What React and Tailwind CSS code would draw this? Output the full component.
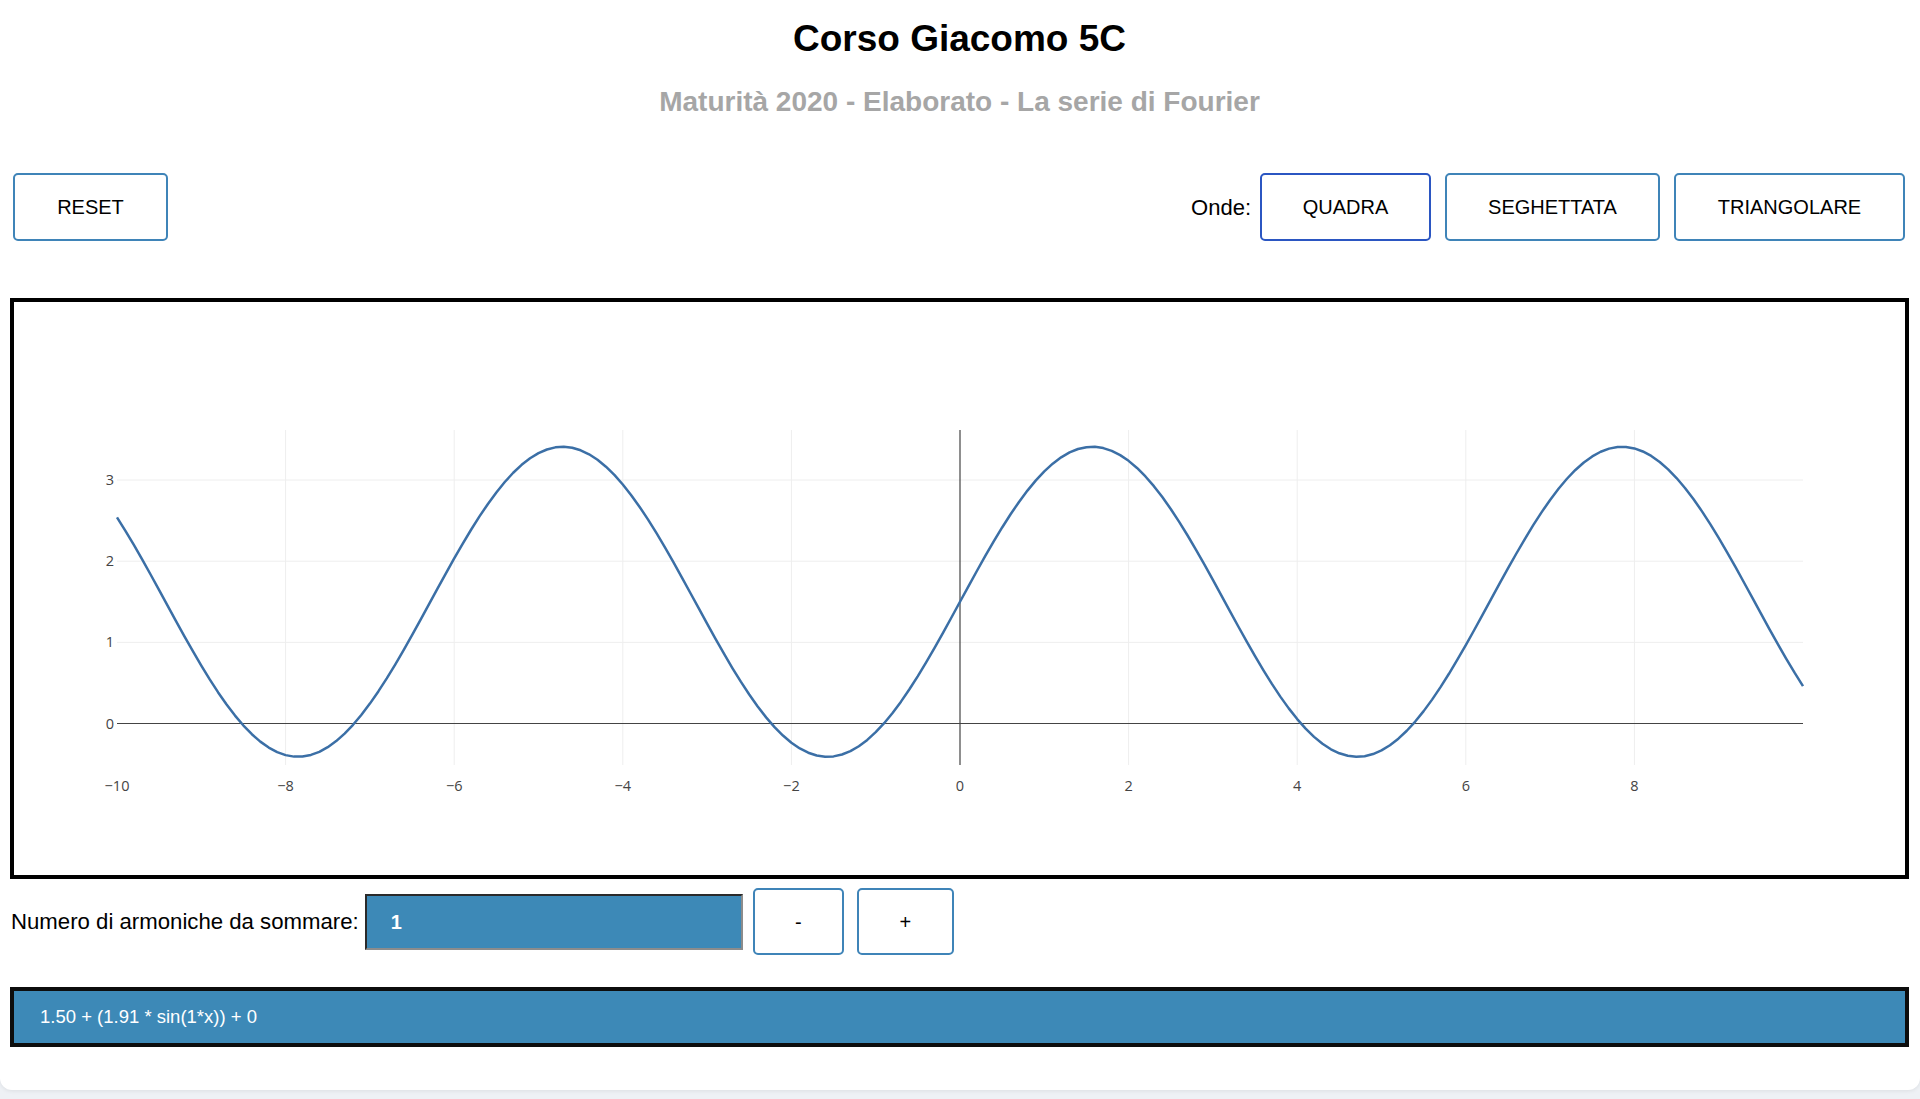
import React from 'react';

// plot geometry (svg units, same as pixels)
const X0 = 946;
const SX = 84.3;
const Y0 = 421.5;
const SY = 81.15;
const px = (x) => X0 + SX * x;
const py = (y) => Y0 - SY * y;
const PLOT_TOP = 128;
const PLOT_BOTTOM = 463;

function serie(x) {
  return 1.5 + 1.91 * Math.sin(1 * x);
}

function Grafico() {
  const punti = [];
  for (let i = 0; i <= 200; i++) {
    const x = -10 + i * 0.1;
    punti.push(`${px(x).toFixed(2)},${py(serie(x)).toFixed(2)}`);
  }
  const xTicks = [-10, -8, -6, -4, -2, 0, 2, 4, 6, 8];
  const yTicks = [0, 1, 2, 3];

  return (
    <svg viewBox="0 0 1891 573" className="block w-full h-[573px]">
      {/* griglia */}
      {[1, 2, 3].map((v) => (
        <line key={'h' + v} x1={px(-10)} x2={px(10)} y1={py(v)} y2={py(v)} stroke="#eeeeee" strokeWidth="1" />
      ))}
      {[-8, -6, -4, -2, 2, 4, 6, 8].map((v) => (
        <line key={'v' + v} x1={px(v)} x2={px(v)} y1={PLOT_TOP} y2={PLOT_BOTTOM} stroke="#eeeeee" strokeWidth="1" />
      ))}
      {/* assi */}
      <line x1={px(-10)} x2={px(10)} y1={py(0)} y2={py(0)} stroke="#444" strokeWidth="1.2" />
      <line x1={px(0)} x2={px(0)} y1={PLOT_TOP} y2={PLOT_BOTTOM} stroke="#444" strokeWidth="1.2" />

      <polyline points={punti.join(' ')} fill="none" stroke="#3b6fa6" strokeWidth="2.5" strokeLinejoin="round" />

      <g fontFamily="'Open Sans', Verdana, Arial, sans-serif" fontSize="14.5" fill="#444">
        {yTicks.map((v) => (
          <text key={'yt' + v} x={100} y={py(v) + 5} textAnchor="end">
            {v}
          </text>
        ))}
        {xTicks.map((v) => (
          <text key={'xt' + v} x={px(v)} y={489} textAnchor="middle">
            {v < 0 ? '\u2212' + Math.abs(v) : v}
          </text>
        ))}
      </g>
    </svg>
  );
}

export default function App() {
  const btn = 'h-[68px] rounded-[5px] border-2 bg-white text-[20px] text-black flex items-center justify-center';

  return (
    <div className="min-h-screen bg-[#eef1f5]" style={{ fontFamily: "'Liberation Sans', Arial, Helvetica, sans-serif" }}>
      <div className="bg-white rounded-b-[12px] shadow-[0_1px_4px_rgba(0,0,0,0.08)] pt-[17px] pb-[43px] pl-[10px] pr-[11px]">
        <h1 className="text-[37px] leading-[44px] font-bold text-center text-black">Corso Giacomo 5C</h1>
        <h2 className="mt-[24px] text-[28px] leading-[34px] font-bold text-center text-[#a6a6a6]">
          Maturità 2020 - Elaborato - La serie di Fourier
        </h2>

        <div className="mt-[54px] ml-[3px] mr-[4px] flex items-center justify-between">
          <button className={btn + ' w-[155px] border-[#3f84b8]'}>RESET</button>
          <div className="flex items-center">
            <span className="text-[22px] text-black mr-[9px]">Onde:</span>
            <button className={btn + ' w-[171px] border-[#2b56c2]'}>QUADRA</button>
            <button className={btn + ' w-[215px] ml-[14px] border-[#3f84b8]'}>SEGHETTATA</button>
            <button className={btn + ' w-[231px] ml-[14px] border-[#3f84b8]'}>TRIANGOLARE</button>
          </div>
        </div>

        <div className="mt-[57px] border-4 border-black bg-white">
          <Grafico />
        </div>

        <div className="mt-[9px] flex items-center">
          <span className="ml-px text-[22.2px] text-black">Numero di armoniche da sommare:</span>
          <div className="ml-[6px] w-[378px] h-[56px] bg-[#3d89b7] border-2 border-t-[#2a2a2a] border-l-[#2a2a2a] border-b-[#8c8c8c] border-r-[#8c8c8c] flex items-center pl-[24px] text-white text-[20px] font-bold">
            1
          </div>
          <button className="ml-[10px] w-[91px] h-[67px] rounded-[5px] border-2 border-[#3f84b8] bg-white text-[20px] text-black">-</button>
          <button className="ml-[13px] w-[97px] h-[67px] rounded-[5px] border-2 border-[#3f84b8] bg-white text-[20px] text-black">+</button>
        </div>

        <div className="mt-[32px] h-[60px] border-4 border-[#0d0d0d] bg-[#3d89b7] flex items-center pl-[26px] text-white text-[18.5px]">
          1.50 + (1.91 * sin(1*x)) + 0
        </div>
      </div>
    </div>
  );
}
